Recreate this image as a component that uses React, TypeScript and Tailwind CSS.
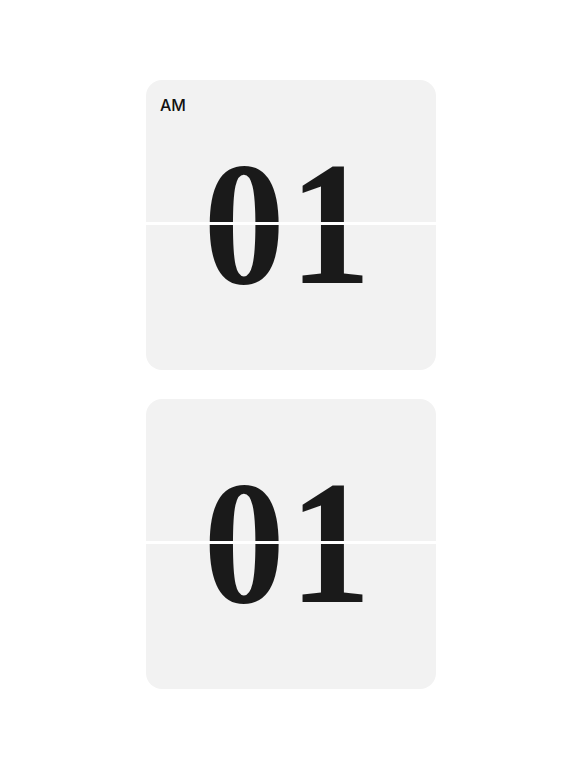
const digitFont = { fontFamily: '"Liberation Serif", "DejaVu Serif", serif' };

function FlipCard({ value, label }: { value: string; label?: string }) {
  return (
    <div className="relative w-[290px] h-[290px] rounded-[16px] bg-[#f2f2f2] overflow-hidden flex items-center justify-center">
      {label && (
        <span className="absolute left-[14px] top-[13px] text-[16px] font-medium text-[#111] [font-family:Inter,'Liberation_Sans',sans-serif]">
          {label}
        </span>
      )}
      <span
        style={digitFont}
        className="text-[175px] font-bold leading-none text-[#1a1a1a] tracking-[5px] scale-x-[0.93] -translate-y-[1px] -translate-x-[2px]"
      >
        {value}
      </span>
      {/* split line between the two flaps */}
      <div className="absolute left-0 right-0 top-[142px] h-[3px] bg-white" />
    </div>
  );
}

export default function App() {
  return (
    <div className="min-h-[768px] bg-white flex flex-col gap-[29px] pt-[80px] pl-[146px]">
      <FlipCard value="01" label="AM" />
      <FlipCard value="01" />
    </div>
  );
}
